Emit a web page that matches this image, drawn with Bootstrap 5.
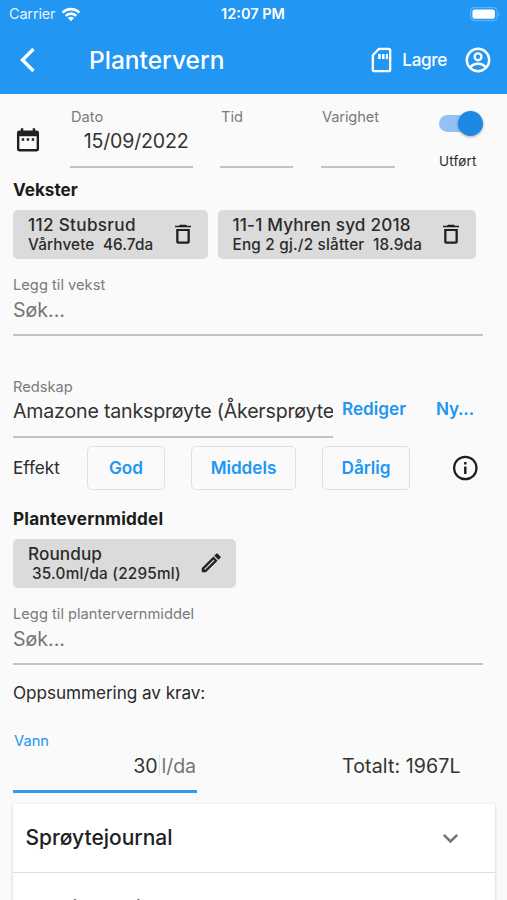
<!DOCTYPE html>
<html lang="no">
<head>
<meta charset="utf-8">
<meta name="viewport" content="width=device-width, initial-scale=1">
<title>Plantervern</title>
<link href="https://cdn.jsdelivr.net/npm/bootstrap@5.3.0/dist/css/bootstrap.min.css" rel="stylesheet">
<style>
  html, body { height: 900px; overflow: hidden; }
  body { font-family: Inter, "Liberation Sans", sans-serif; background: #fafafa; color: #2b2b2b; font-size: 17.15px; line-height: 20px; }
  svg { display: block; flex: none; }
  .app-top { background: #2196f3; height: 94px; color: #fff; }
  .status { height: 28px; font-size: 14.5px; padding: 0 6px 0 9px; }
  .status > div { flex: 1 1 0; }
  .carrier { letter-spacing: -.18px; color: #e6f3fe; }
  .appbar { height: 64px; padding: 0 16px 0 19px; }
  .page-title { font-size: 24.5px; font-weight: 500; letter-spacing: 0; line-height: 30px; margin: 0 0 0 52px; }
  .lagre { font-weight: 500; letter-spacing: -.35px; margin: 0 18px 0 10px; }
  .page { padding: 0 12px 0 13px; }
  .lbl { font-size: 14.7px; color: #7b7b7b; white-space: nowrap; }
  .val { font-size: 19.6px; line-height: 24px; color: #333; white-space: nowrap; }
  .line { border-bottom: 2px solid #c2c2c2; }
  .date-row { height: 86px; padding-top: 12px; }
  .date-field { height: 62px; }
  .date-field .lbl { padding: 1px 0 0 1px; }
  .date-icon { margin: 20px 0 0 3px; }
  .h-sec { font-size: 17.15px; line-height: 20px; font-weight: 700; color: #1c1c1c; margin: 0; }
  .chip { background: #dbdbdb; border-radius: 5px; height: 48.5px; padding: 5px 16px 0 15px; font-weight: 500; }
  .chip-sub { font-size: 15.3px; white-space: pre; }
  .search { width: 470px; height: 61px; margin-top: 16.5px; }
  .search .val { color: #757575; margin-top: 2.5px; }
  .link { color: #2196f3; font-weight: 600; }
  .btn-eff { --bs-btn-color: #2196f3; --bs-btn-border-color: #e0e0e0; --bs-btn-border-radius: 5px; --bs-btn-padding-x: 0; --bs-btn-padding-y: 0; font-size: 17.15px; font-weight: 600; height: 44px; }
  .switch-track { width: 40px; height: 17px; border-radius: 9px; background: #90c3f4; }
  .switch-knob { width: 25px; height: 25px; border-radius: 50%; background: #1e88e5; box-shadow: 0 1px 3px rgba(0,0,0,.35); margin-right: -4px; }
  .water { width: 184px; height: 61.5px; border-bottom: 3px solid #2f9bf2; }
  .caret { width: 1px; height: 23px; background: #cfe9f3; margin: 0 2px 0 1px; }
  .panel { background: #fff; width: 482px; height: 110px; box-shadow: 0 1px 3px rgba(0,0,0,.2); }
  .panel-item { height: 69px; padding: 0 32px 0 12.5px; border-bottom: 1px solid #e0e0e0; font-size: 21px; font-weight: 500; color: #212121; }
</style>
</head>
<body>
<header class="app-top">
  <div class="status d-flex align-items-center">
    <div class="d-flex align-items-center carrier">Carrier
      <svg style="margin-left: 6px" width="20" height="15" viewBox="0 0 20 15" fill="none" stroke="#fff" stroke-width="2.6"><path d="M1.6 5.6C6.2 .9 13.800 .9 18.400 5.600M4.700 8.800C7.600 5.900 12.400 5.900 15.300 8.800"/><path d="M10 14.300 6.900 11.100Q10 8.400 13.100 11.100Z" fill="#fff" stroke="none"/></svg>
    </div>
    <div class="text-center fw-semibold text-nowrap pe-1">12:07 PM</div>
    <div class="d-flex justify-content-end"><svg width="31" height="15" viewBox="0 0 31 15"><rect x=".6" y=".6" width="26.500" height="13" rx="4" fill="none" stroke="#5fb2f6" stroke-width="1.200"/><rect x="2.400" y="2.500" width="22.500" height="9.300" rx="2.200" fill="#fff"/><path d="M28.500 5q2 2.200 0 4.400z" fill="#7cc0f8"/></svg></div>
  </div>
  <div class="appbar d-flex align-items-center">
    <svg width="18" height="26" viewBox="0 0 18 26" fill="none" stroke="#fff" stroke-width="3.400"><path d="M14.500 2 3.500 13l11 11"/></svg>
    <h1 class="page-title">Plantervern</h1>
    <svg class="ms-auto" width="21" height="26" viewBox="0 0 21 26"><path d="M8 1.800h9.500q1.700 0 1.700 1.700v19q0 1.700-1.700 1.700h-14q-1.700 0-1.700-1.700V8.200z" fill="none" stroke="#fff" stroke-width="2.300" stroke-linejoin="round"/><path d="M7.200 7h2.500v5H7.200zM11 7h2.500v5H11zM14.800 7h2.200v5h-2.200z" fill="#fff"/></svg>
    <span class="lagre">Lagre</span>
    <svg width="26" height="26" viewBox="0 0 26 26" fill="none" stroke="#fff" stroke-width="2.400"><circle cx="13" cy="13" r="11.200"/><circle cx="13" cy="9.800" r="3.400"/><path d="M5.300 20.500Q8 16.800 13 16.800T20.700 20.500"/></svg>
  </div>
</header>

<main class="page">
  <div class="date-row d-flex">
    <svg class="date-icon" width="24" height="28" viewBox="0 0 25 28"><path d="M5 1.700h2.600v2.400h9.800V1.700H20v2.400h1.500q2.500 0 2.500 2.500v16.800q0 2.500-2.500 2.500h-18Q1 25.900 1 23.400V6.600q0-2.500 2.500-2.500H5zM3.500 10v12.600q0 .9.900.9h16.200q.9 0 .9-.9V10z" fill="#202020" fill-rule="evenodd"/><path d="M6 12.300h2.500v2.500H6zM11.200 12.300h2.500v2.500h-2.500zM16.400 12.300h2.500v2.500h-2.500z" fill="#202020"/></svg>
    <div class="date-field line" style="width: 123px; margin-left: 30px"><div class="lbl">Dato</div><div class="val text-end" style="padding: 2px 4.500px 0 0; letter-spacing: -.2px">15/09/2022</div></div>
    <div class="date-field line" style="width: 73px; margin-left: 27px"><div class="lbl">Tid</div></div>
    <div class="date-field line" style="width: 74px; margin-left: 28px"><div class="lbl" style="letter-spacing: -.15px">Varighet</div></div>
    <div style="margin-left: 43px">
      <div class="switch-track d-flex align-items-center justify-content-end" style="margin: 9px 0 0 1px"><div class="switch-knob"></div></div>
      <div style="margin: 19px 0 0 1px; font-size: 13.500px; letter-spacing: .18px; line-height: 20px">Utført</div>
    </div>
  </div>

  <h2 class="h-sec" style="letter-spacing: -.02px">Vekster</h2>
  <div class="d-flex" style="gap: 10px; margin-top: 10px">
    <div class="chip d-flex" style="width: 194.500px">
      <div><div style="letter-spacing: .33px">112 Stubsrud</div><div class="chip-sub" style="letter-spacing: .14px">Vårhvete  46.7da</div></div>
      <svg class="ms-auto" style="margin-top: 9px" width="18" height="21" viewBox="0 0 18 21"><path d="M1 3.300V1.800h4L6 .8h6l1 1h4v1.500zM2.200 5h13.600v12.700q0 2.100-2.100 2.100H4.300q-2.100 0-2.100-2.100zM4.500 7v10.600h9V7z" fill="#202020" fill-rule="evenodd"/></svg>
    </div>
    <div class="chip d-flex" style="width: 258.500px">
      <div><div style="letter-spacing: .18px">11-1 Myhren syd 2018</div><div class="chip-sub" style="letter-spacing: .2px">Eng 2 gj./2 slåtter  18.9da</div></div>
      <svg class="ms-auto" style="margin-top: 9px" width="18" height="21" viewBox="0 0 18 21"><path d="M1 3.300V1.800h4L6 .8h6l1 1h4v1.500zM2.200 5h13.600v12.700q0 2.100-2.100 2.100H4.300q-2.100 0-2.100-2.100zM4.500 7v10.600h9V7z" fill="#202020" fill-rule="evenodd"/></svg>
    </div>
  </div>
  <div class="search line"><div class="lbl">Legg til vekst</div><div class="val">Søk...</div></div>

  <div class="d-flex" style="margin-top: 41px; height: 61px">
    <div class="line overflow-hidden" style="width: 319.500px"><div class="lbl">Redskap</div><div class="val" style="margin-top: 2px; letter-spacing: -.19px">Amazone tanksprøyte (Åkersprøyte</div></div>
    <div class="link" style="margin: 22px 0 0 9.500px">Rediger</div>
    <div class="link" style="margin: 22px 0 0 30px; letter-spacing: -.2px">Ny...</div>
  </div>
  <div class="d-flex align-items-center" style="margin-top: 8px; height: 44px">
    <div style="width: 74px">Effekt</div>
    <button class="btn btn-eff" style="width: 78px">God</button>
    <button class="btn btn-eff" style="width: 105px; margin-left: 26px">Middels</button>
    <button class="btn btn-eff" style="width: 88px; margin-left: 26px">Dårlig</button>
    <svg style="margin-left: 42px" width="26" height="26" viewBox="0 0 26 26"><circle cx="13.300" cy="13" r="11.200" fill="none" stroke="#1c1c1c" stroke-width="2.200"/><path d="M12.100 7h2.400v2.400h-2.400zM12.100 11.600h2.400v7.400h-2.400z" fill="#1c1c1c"/></svg>
  </div>

  <h2 class="h-sec" style="margin-top: 19px; letter-spacing: .2px">Plantevernmiddel</h2>
  <div class="chip d-flex" style="width: 222.500px; margin-top: 10px; padding-right: 15px">
    <div><div style="letter-spacing: .1px">Roundup</div><div class="chip-sub" style="letter-spacing: .22px; padding-left: 4px">35.0ml/da (2295ml)</div></div>
    <svg class="ms-auto" style="margin-top: 9px" width="20" height="20" viewBox="0 0 20 20"><path d="M1 15.200 12.400 3.800l3.900 3.900L4.900 19H1zM3 16v1.100h1.100L13.500 7.700l-1.100-1.100zM13.600 2.700 15.200 1q.8-.7 1.500 0l2.400 2.400q.7.800 0 1.500l-1.700 1.700z" fill="#202020" stroke="#202020" stroke-width=".5" fill-rule="evenodd"/></svg>
  </div>
  <div class="search line"><div class="lbl">Legg til plantervernmiddel</div><div class="val">Søk...</div></div>

  <div style="margin-top: 18px; letter-spacing: -.05px">Oppsummering av krav:</div>
  <div class="d-flex" style="margin-top: 28px">
    <div class="water">
      <div class="lbl" style="color: #2196f3; padding-left: 1px">Vann</div>
      <div class="val d-flex align-items-center justify-content-end" style="margin-top: 2.500px; padding-right: 1px"><span>30</span><span class="caret"></span><span style="color: #757575; letter-spacing: -.1px">l/da</span></div>
    </div>
    <div class="val" style="margin: 22.500px 0 0 145px; letter-spacing: .1px">Totalt: 1967L</div>
  </div>

  <section class="panel" style="margin-top: 11.500px">
    <div class="panel-item d-flex align-items-center justify-content-between">Sprøytejournal
      <svg style="margin-right: 4px" width="17" height="11" viewBox="0 0 17 11" fill="none" stroke="#757575" stroke-width="2.600"><path d="m1.800 1.800 6.700 6.700 6.700-6.700"/></svg>
    </div>
    <div class="panel-item d-flex align-items-center border-0" style="height: 72px">Verdi og pris</div>
  </section>
</main>
<script src="https://cdn.jsdelivr.net/npm/bootstrap@5.3.0/dist/js/bootstrap.bundle.min.js"></script>
</body>
</html>
